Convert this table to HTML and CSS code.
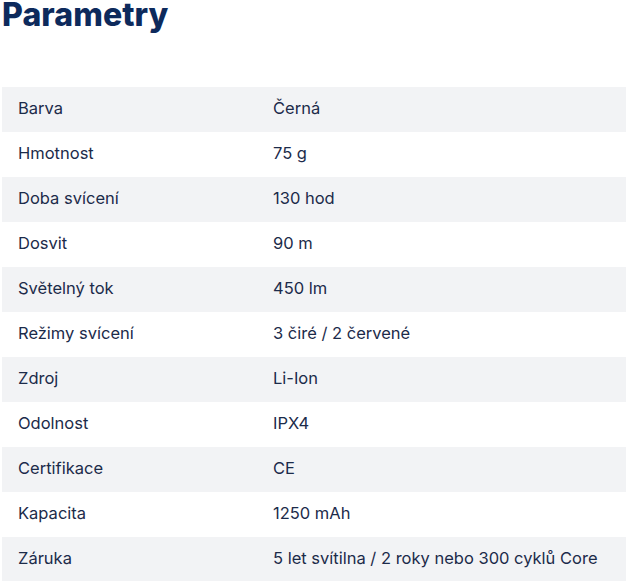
FILE: index.html
```html
<!DOCTYPE html>
<html lang="cs">
<head>
<meta charset="utf-8">
<title>Parametry</title>
<link rel="stylesheet" href="styles.css">
</head>
<body>
<div class="wrap">
  <h2 class="title">Parametry</h2>
  <table class="params">
    <tbody>
      <tr><td>Barva</td><td>Černá</td></tr>
      <tr><td>Hmotnost</td><td>75 g</td></tr>
      <tr><td>Doba svícení</td><td>130 hod</td></tr>
      <tr><td>Dosvit</td><td>90 m</td></tr>
      <tr><td>Světelný tok</td><td>450 lm</td></tr>
      <tr><td>Režimy svícení</td><td>3 čiré / 2 červené</td></tr>
      <tr><td>Zdroj</td><td>Li-Ion</td></tr>
      <tr><td>Odolnost</td><td>IPX4</td></tr>
      <tr><td>Certifikace</td><td>CE</td></tr>
      <tr><td>Kapacita</td><td>1250 mAh</td></tr>
      <tr><td>Záruka</td><td>5 let svítilna / 2 roky nebo 300 cyklů Core</td></tr>
    </tbody>
  </table>
</div>
</body>
</html>
```
FILE: styles.css
```css
html, body {
  margin: 0;
  padding: 0;
  background: #ffffff;
}
.wrap {
  padding: 0 1px 0 2px;
  font-family: Inter, "Open Sans", sans-serif;
  color: #1c2b4a;
}
.title {
  margin: 0;
  font-size: 32px;
  line-height: 30px;
  font-weight: 800;
  color: #0d2a5c;
  letter-spacing: 0.1px;
}
.params {
  margin-top: 57px;
  width: 100%;
  border-collapse: collapse;
  font-size: 16.5px;
}
.params td {
  height: 45px;
  padding: 0 16px 3px;
  vertical-align: middle;
  box-sizing: border-box;
}
.params td:first-child {
  width: 255px;
}
.params tr:nth-child(odd) td {
  background: #f2f3f5;
}
```
